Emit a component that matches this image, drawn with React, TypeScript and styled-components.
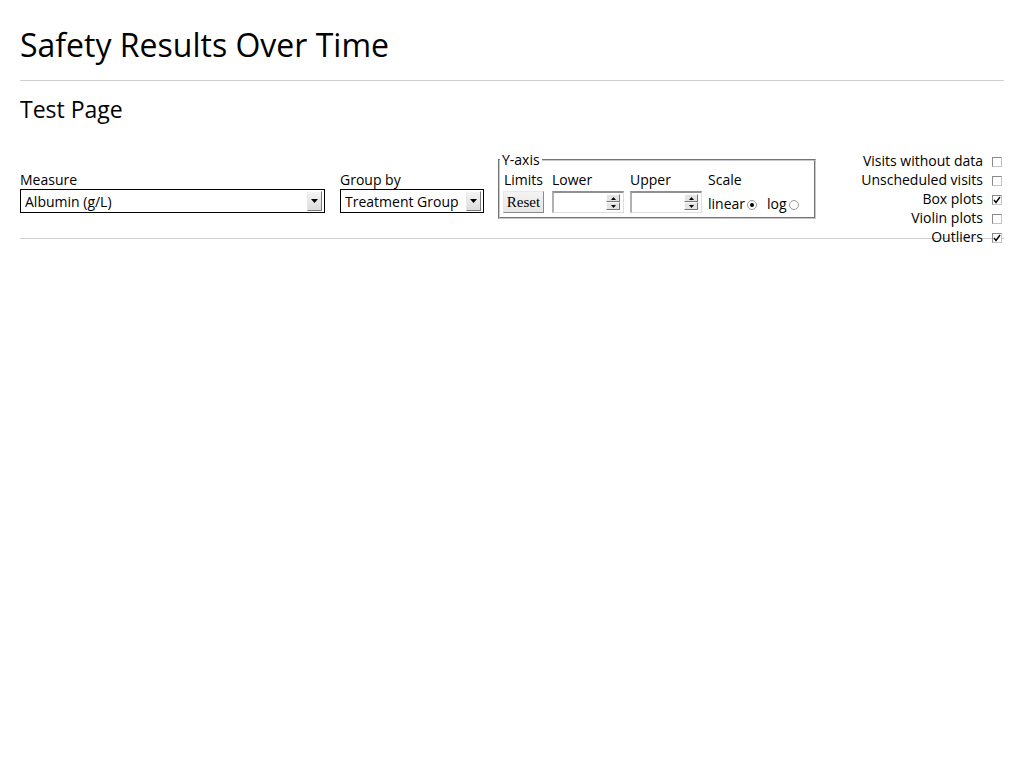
import styled, { createGlobalStyle } from "styled-components";

const GlobalStyle = createGlobalStyle`
  body {
    margin: 0;
    background: #fff;
    color: #000;
    font-family: "Open Sans", "DejaVu Sans", sans-serif;
  }
`;

const toggles = [
  { label: "Visits without data", checked: false },
  { label: "Unscheduled visits", checked: false },
  { label: "Box plots", checked: true },
  { label: "Violin plots", checked: false },
  { label: "Outliers", checked: true },
];

function ArrowDown() {
  return (
    <svg width="7" height="4" viewBox="0 0 7 4">
      <path d="M0 0h7L3.5 4z" fill="#000" />
    </svg>
  );
}

function SelectBox(props: { value: string; width: number }) {
  return (
    <SelectFrame $width={props.width}>
      <SelectInput defaultValue={props.value}>
        <option>{props.value}</option>
      </SelectInput>
      <DropButton>
        <ArrowDown />
      </DropButton>
    </SelectFrame>
  );
}

function NumberBox() {
  return (
    <NumberFrame>
      <NumberInput type="text" />
      <Spinner>
        <SpinButton>
          <svg width="5" height="3" viewBox="0 0 5 3">
            <path d="M0 3h5L2.5 0z" fill="#000" />
          </svg>
        </SpinButton>
        <SpinButton>
          <svg width="5" height="3" viewBox="0 0 5 3">
            <path d="M0 0h5L2.5 3z" fill="#000" />
          </svg>
        </SpinButton>
      </Spinner>
    </NumberFrame>
  );
}

function CheckMark() {
  return (
    <svg width="8" height="8" viewBox="0 0 8 8">
      <path d="M1 4l2 2.5L7 1" stroke="#000" strokeWidth="1.4" fill="none" />
    </svg>
  );
}

export default function App() {
  return (
    <Page>
      <GlobalStyle />
      <Title>Safety Results Over Time</Title>
      <Rule $top={17} $bottom={13} />
      <Subtitle>Test Page</Subtitle>
      <Controls>
        <Field $gap={15}>
          <Label>Measure</Label>
          <SelectBox value="Albumin (g/L)" width={305} />
        </Field>
        <Field $gap={14}>
          <Label>Group by</Label>
          <SelectBox value="Treatment Group" width={144} />
        </Field>
        <AxisSet>
          <Legend>Y-axis</Legend>
          <AxisGrid>
            <Label>Limits</Label>
            <Label>Lower</Label>
            <Label>Upper</Label>
            <Label>Scale</Label>
            <ResetButton>Reset</ResetButton>
            <NumberBox />
            <NumberBox />
            <ScaleRow>
              <RadioLabel>
                linear <Radio $checked />
              </RadioLabel>
              <RadioLabel>
                log <Radio />
              </RadioLabel>
            </ScaleRow>
          </AxisGrid>
        </AxisSet>
        <ToggleList>
          {toggles.map((t) => (
            <ToggleRow key={t.label}>
              <span>{t.label}</span>
              <CheckBox>{t.checked && <CheckMark />}</CheckBox>
            </ToggleRow>
          ))}
        </ToggleList>
      </Controls>
      <Rule $top={19} $bottom={0} />
    </Page>
  );
}

const Page = styled.div`
  min-height: 100vh;
  box-sizing: border-box;
  padding: 0 20px 20px;
`;

const Title = styled.h1`
  margin: 0;
  padding-top: 27px;
  font-size: 32px;
  font-weight: 400;
  line-height: 36px;
`;

const Rule = styled.hr<{ $top: number; $bottom: number }>`
  border: 0;
  border-top: 1px solid #cfcfcf;
  margin: ${(p) => p.$top}px 0 ${(p) => p.$bottom}px;
  overflow: visible;
`;

const Subtitle = styled.h2`
  margin: 0;
  font-size: 23px;
  font-weight: 400;
  line-height: 30px;
`;

const Controls = styled.div`
  display: flex;
  align-items: flex-end;
  margin-top: 26px;
`;

const Field = styled.div<{ $gap: number }>`
  display: flex;
  flex-direction: column;
  margin: 0 ${(p) => p.$gap}px 6px 0;
`;

const Label = styled.div`
  font-size: 14px;
  line-height: 19px;
  white-space: nowrap;
`;

const SelectFrame = styled.div<{ $width: number }>`
  display: flex;
  align-items: center;
  box-sizing: border-box;
  width: ${(p) => p.$width}px;
  height: 24px;
  border: 1px solid #000;
  padding-right: 2px;
  background: #fff;
`;

const SelectInput = styled.select`
  flex: 1;
  min-width: 0;
  appearance: none;
  border: 0;
  background: transparent;
  padding: 0 0 0 4px;
  font-family: "Open Sans", "DejaVu Sans", sans-serif;
  font-size: 14px;
  color: #000;
  outline: none;
`;

const DropButton = styled.span`
  display: flex;
  align-items: center;
  justify-content: center;
  box-sizing: border-box;
  width: 15px;
  height: 20px;
  background: linear-gradient(#f4f4f4, #dcdcdc);
  border: 1px solid;
  border-color: #fff #7a7a7a #7a7a7a #e6e6e6;
`;

const AxisSet = styled.fieldset`
  margin: 0;
  padding: 1px 15px 4px 4px;
  border: 2px groove #c8c8c8;
  min-width: 0;
`;

const Legend = styled.legend`
  margin-left: -4px;
  padding: 0 2px;
  font-size: 14px;
  line-height: 19px;
`;

const AxisGrid = styled.div`
  display: grid;
  grid-template-columns: 42px 72px 72px auto;
  grid-template-rows: 19px 22px;
  column-gap: 6px;
  row-gap: 2px;
`;

const ResetButton = styled.button`
  box-sizing: border-box;
  width: 41px;
  height: 22px;
  margin-left: -1px;
  padding: 0;
  font-family: "Liberation Serif", "Times New Roman", serif;
  font-size: 15px;
  color: #000;
  background: linear-gradient(#f3f3f3, #e6e6e6);
  border: 1px solid;
  border-color: #e8e8e8 #8a8a8a #8a8a8a #e8e8e8;
  border-radius: 0;
`;

const NumberFrame = styled.div`
  display: flex;
  align-items: flex-start;
  box-sizing: border-box;
  height: 22px;
  border-style: solid;
  border-width: 2px 1px 1px 2px;
  border-color: #8f8f8f #dedede #dedede #b0b0b0;
  padding: 1px 3px 0 0;
  background: #fff;
`;

const NumberInput = styled.input`
  flex: 1;
  min-width: 0;
  border: 0;
  padding: 0 2px;
  height: 17px;
  font-size: 13px;
  outline: none;
  background: transparent;
`;

const Spinner = styled.span`
  display: flex;
  flex-direction: column;
  width: 14px;
`;

const SpinButton = styled.span`
  display: flex;
  align-items: center;
  justify-content: center;
  box-sizing: border-box;
  height: 8px;
  background: #e4e4e4;
  border: 1px solid;
  border-color: #fafafa #777 #777 #fafafa;
`;

const ScaleRow = styled.div`
  display: flex;
  align-items: center;
  gap: 10px;
  padding-top: 3px;
`;

const RadioLabel = styled.span`
  display: flex;
  align-items: center;
  gap: 2px;
  font-size: 14px;
  line-height: 19px;
`;

const Radio = styled.span<{ $checked?: boolean }>`
  position: relative;
  box-sizing: border-box;
  width: 10px;
  height: 10px;
  margin-top: 3px;
  border: 1px solid #9a9a9a;
  border-radius: 50%;
  background: #fff;

  &::after {
    content: "";
    display: ${(p) => (p.$checked ? "block" : "none")};
    position: absolute;
    left: 2px;
    top: 2px;
    width: 4px;
    height: 4px;
    border-radius: 50%;
    background: #000;
  }
`;

const ToggleList = styled.div`
  align-self: flex-start;
  display: flex;
  flex-direction: column;
  align-items: flex-end;
  margin: 0 2px -28px auto;
  padding-top: 1px;
`;

const ToggleRow = styled.div`
  display: flex;
  align-items: center;
  gap: 9px;
  height: 19px;
  font-size: 14px;
  white-space: nowrap;
`;

const CheckBox = styled.span`
  display: flex;
  align-items: center;
  justify-content: center;
  box-sizing: border-box;
  width: 10px;
  height: 10px;
  margin-top: 2px;
  border: 1px solid;
  border-color: #8a8a8a #c4c4c4 #c4c4c4 #8a8a8a;
  background: #fff;
`;
